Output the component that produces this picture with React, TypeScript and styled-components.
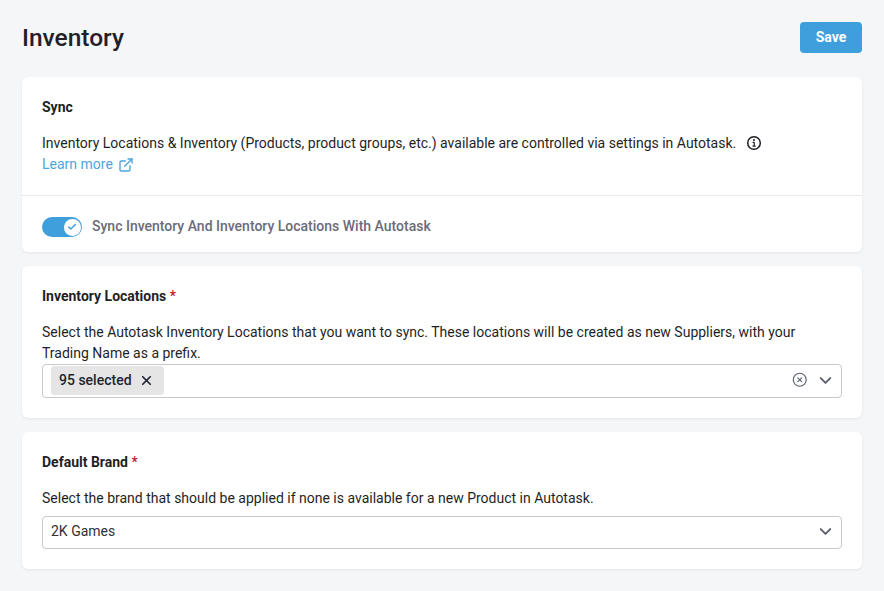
import React from "react";
import styled, { createGlobalStyle } from "styled-components";
import { Check, ChevronDown, CircleX, ExternalLink, X } from "lucide-react";

const Global = createGlobalStyle`
  html, body { margin: 0; padding: 0; background: #f5f6f8; }
  body { font-family: Roboto, "Liberation Sans", sans-serif; font-size: 14px; line-height: 21px; color: #1f1f26; }
`;

const Page = styled.div`
  padding: 22px 22px 22px;
  display: flex;
  flex-direction: column;
`;
const Header = styled.header`
  display: flex;
  justify-content: space-between;
  align-items: center;
  height: 31px;
  margin-bottom: 24px;
`;
const Title = styled.h1`
  margin: 0;
  font-size: 24.5px;
  line-height: 31px;
  font-weight: 500;
  color: #231f2a;
`;
const SaveButton = styled.button`
  width: 62px;
  height: 31px;
  border: 0;
  border-radius: 4px;
  background: #3f9fdc;
  color: #fff;
  font: 700 14px/21px Roboto, sans-serif;
`;
const Card = styled.section`
  background: #fff;
  border-radius: 6px;
  box-shadow: 0 1px 3px rgba(30, 35, 50, 0.08);
  margin-bottom: 14px;
`;
const CardBody = styled.div`
  padding: 20px;
`;
const CardTitle = styled.h2`
  margin: 0 0 15px;
  font-size: 14px;
  line-height: 21px;
  font-weight: 700;
  color: #1f1f26;
`;
const Required = styled.span`
  color: #c8102e;
  font-weight: 500;
`;
const Text = styled.p<{ $bottom?: number }>`
  margin: 0 0 ${(p) => p.$bottom ?? 0}px;
`;
const InfoGlyph = styled.svg`
  width: 16px;
  height: 16px;
  vertical-align: -3px;
  margin-left: 10px;
  color: #1f1f26;
`;
const LearnLink = styled.a`
  display: flex;
  align-items: center;
  gap: 5px;
  color: #4ea5e0;
`;
const Divider = styled.hr`
  margin: 0;
  border: 0;
  border-top: 1px solid #e8e9eb;
`;
const SwitchRow = styled.div`
  display: flex;
  align-items: center;
  gap: 10px;
  padding: 21px 20px 15px;
`;
const Switch = styled.div`
  position: relative;
  width: 40px;
  height: 20px;
  border-radius: 10px;
  background: #3f9fdc;
`;
const Knob = styled.span`
  position: absolute;
  top: 2px;
  right: 1.5px;
  width: 16.5px;
  height: 16.5px;
  border-radius: 50%;
  background: #fff;
  display: flex;
  align-items: center;
  justify-content: center;
  color: #3f9fdc;
`;
const SwitchLabel = styled.span`
  line-height: 18px;
  margin-bottom: 2px;
  font-weight: 500;
  color: #696c7b;
`;
const Select = styled.div<{ $height: number }>`
  display: flex;
  align-items: center;
  height: ${(p) => p.$height}px;
  box-sizing: border-box;
  border: 1px solid #c9c9c9;
  border-radius: 4px;
  padding: 0 6px 2px 8px;
`;
const Tag = styled.span`
  display: flex;
  align-items: center;
  gap: 7px;
  height: 29px;
  padding: 0 10px 0 8px;
  border-radius: 4px;
  background: #e5e5e5;
  font-weight: 500;
  color: #1f2430;
`;
const Value = styled.span`
  color: #30323c;
`;
const Actions = styled.div`
  margin-left: auto;
  display: flex;
  align-items: center;
  gap: 9px;
  color: #5d6170;
`;

export default function App() {
  return (
    <>
      <Global />
      <Page>
        <Header>
          <Title>Inventory</Title>
          <SaveButton>Save</SaveButton>
        </Header>
        <Card>
          <CardBody>
            <CardTitle>Sync</CardTitle>
            <Text>
              Inventory Locations &amp; Inventory (Products, product groups, etc.) available are controlled via settings in Autotask.
              <InfoGlyph viewBox="0 0 16 16" fill="none" stroke="currentColor">
                <circle cx="8" cy="8" r="6.3" strokeWidth="1.5" />
                <circle cx="8" cy="5" r="1" fill="currentColor" stroke="none" />
                <path d="M6.6 7.4H8.2V11M6.5 11.1H9.6" strokeWidth="1.2" />
              </InfoGlyph>
            </Text>
            <LearnLink>
              Learn more <ExternalLink size={16} strokeWidth={2.1} />
            </LearnLink>
          </CardBody>
          <Divider />
          <SwitchRow>
            <Switch>
              <Knob>
                <Check size={10} strokeWidth={3.5} />
              </Knob>
            </Switch>
            <SwitchLabel>Sync Inventory And Inventory Locations With Autotask</SwitchLabel>
          </SwitchRow>
        </Card>
        <Card>
          <CardBody>
            <CardTitle>
              Inventory Locations <Required>*</Required>
            </CardTitle>
            <Text>
              Select the Autotask Inventory Locations that you want to sync. These locations will be created as new Suppliers, with your Trading Name as a prefix.
            </Text>
            <Select $height={34}>
              <Tag>
                95 selected <X size={15} strokeWidth={2.7} />
              </Tag>
              <Actions>
                <CircleX size={15.5} strokeWidth={1.8} />
                <ChevronDown size={19} strokeWidth={2.5} />
              </Actions>
            </Select>
          </CardBody>
        </Card>
        <Card>
          <CardBody>
            <CardTitle>
              Default Brand <Required>*</Required>
            </CardTitle>
            <Text $bottom={7}>Select the brand that should be applied if none is available for a new Product in Autotask.</Text>
            <Select $height={33}>
              <Value>2K Games</Value>
              <Actions>
                <ChevronDown size={19} strokeWidth={2.5} />
              </Actions>
            </Select>
          </CardBody>
        </Card>
      </Page>
    </>
  );
}
